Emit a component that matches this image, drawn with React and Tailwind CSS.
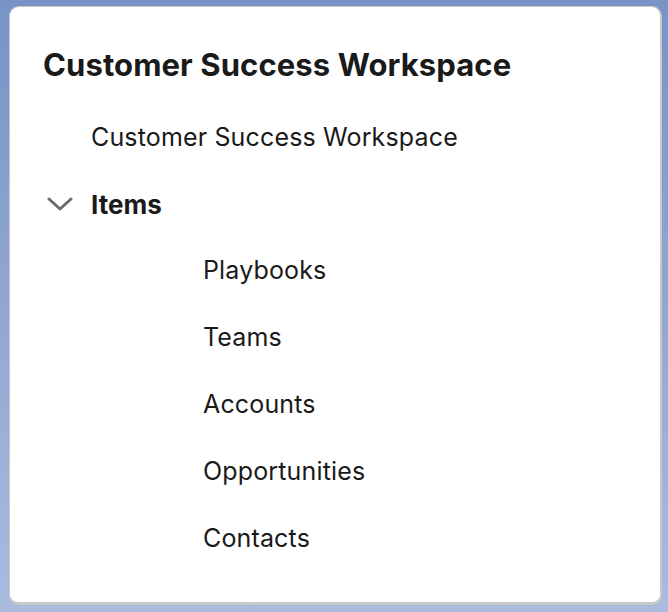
import React from 'react';

const SUB_ITEMS = ['Playbooks', 'Teams', 'Accounts', 'Opportunities', 'Contacts'];

const Chevron = () => (
  <svg width="26" height="16" viewBox="0 0 26 16" fill="none">
    <path d="M2 3 L13 13 L24 3" stroke="#6b6b6b" strokeWidth="3" strokeLinecap="round" strokeLinejoin="round" />
  </svg>
);

export default function App() {
  return (
    <div
      className="w-[668px] h-[612px] bg-gradient-to-b from-[#7893c6] to-[#aabbdf] pt-[6px] pl-[9px] pr-[6px] pb-[7px]"
      style={{ fontFamily: 'Inter, "Noto Sans", sans-serif' }}>
      <div className="h-full w-full bg-white rounded-[10px] border border-[#c8c8c8] border-b-[3px] border-r-[2px] pl-[33px] pt-[38px]">
        <h1 className="text-[31px] font-bold text-[#1a1a1a] leading-[40px] tracking-[0.1px]">
          Customer Success Workspace
        </h1>
        <div className="mt-[20px] flex flex-col">
          <div className="h-[66px] flex items-center pl-[48px] text-[25px] text-[#1a1a1a] tracking-[0.15px]">
            Customer Success Workspace
          </div>
          <div className="h-[66px] flex items-center text-[26px] font-bold text-[#1a1a1a]">
            <span className="w-[48px] flex items-center pl-[4px]">
              <Chevron />
            </span>
            Items
          </div>
          {SUB_ITEMS.map((item) => (
            <div key={item} className="h-[67px] flex items-center pl-[160px] text-[25px] text-[#1a1a1a] tracking-[0.15px]">
              {item}
            </div>
          ))}
        </div>
      </div>
    </div>
  );
}
